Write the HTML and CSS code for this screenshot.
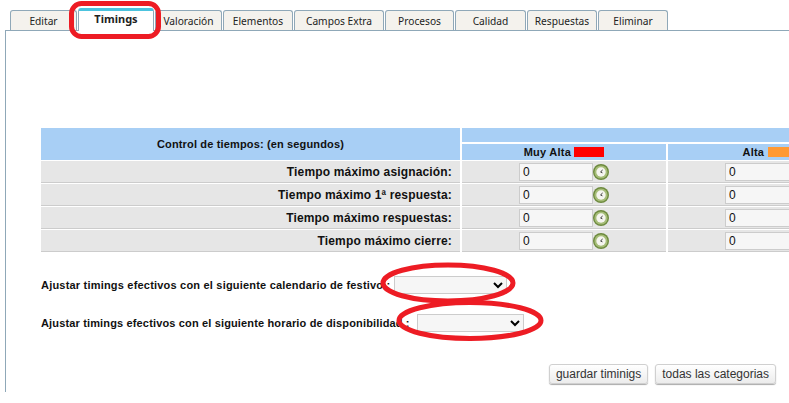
FILE: index.html
```html
<!DOCTYPE html>
<html lang="es">
<head>
<meta charset="utf-8">
<title>Timings</title>
<link rel="stylesheet" href="styles.css">
</head>
<body>
<nav class="tabs">
  <a class="tab tab-first">Editar</a>
  <a class="tab tab-active">Timings</a>
  <a class="tab tab-val">Valoración</a>
  <a class="tab tab-ele">Elementos</a>
  <a class="tab tab-cam">Campos Extra</a>
  <a class="tab tab-pro">Procesos</a>
  <a class="tab tab-cal">Calidad</a>
  <a class="tab tab-ele">Respuestas</a>
  <a class="tab tab-ele">Eliminar</a>
</nav>
<main class="panel">
  <table class="timings">
    <colgroup><col class="c1"><col class="c2"><col class="c3"></colgroup>
    <thead>
      <tr><th rowspan="2" class="head-main">Control de tiempos: (en segundos)</th><th colspan="2" class="head-top"></th></tr>
      <tr>
        <th class="head-sub">Muy Alta <span class="swatch swatch-red"></span></th>
        <th class="head-sub">Alta <span class="swatch swatch-orange"></span></th>
      </tr>
    </thead>
    <tbody>
      <tr><td class="label">Tiempo máximo asignación:</td>
        <td class="val"><div class="field"><input value="0"><svg class="clock" viewBox="0 0 16 16"><use href="#clock"/></svg></div></td>
        <td class="val"><div class="field"><input value="0"></div></td></tr>
      <tr><td class="label">Tiempo máximo 1ª respuesta:</td>
        <td class="val"><div class="field"><input value="0"><svg class="clock" viewBox="0 0 16 16"><use href="#clock"/></svg></div></td>
        <td class="val"><div class="field"><input value="0"></div></td></tr>
      <tr><td class="label">Tiempo máximo respuestas:</td>
        <td class="val"><div class="field"><input value="0"><svg class="clock" viewBox="0 0 16 16"><use href="#clock"/></svg></div></td>
        <td class="val"><div class="field"><input value="0"></div></td></tr>
      <tr><td class="label">Tiempo máximo cierre:</td>
        <td class="val"><div class="field"><input value="0"><svg class="clock" viewBox="0 0 16 16"><use href="#clock"/></svg></div></td>
        <td class="val"><div class="field"><input value="0"></div></td></tr>
    </tbody>
  </table>
  <div class="adjust adjust-1">
    <label>Ajustar timings efectivos con el siguiente calendario de festivo :</label>
    <select class="sel sel-1"><option></option></select>
  </div>
  <div class="adjust adjust-2">
    <label>Ajustar timings efectivos con el siguiente horario de disponibilidad :</label>
    <select class="sel sel-2"><option></option></select>
  </div>
  <div class="actions">
    <button>guardar timinigs</button>
    <button>todas las categorias</button>
  </div>
</main>
<svg class="marks" viewBox="0 0 789 403" aria-hidden="true">
  <rect x="71.5" y="3.5" width="87" height="33" rx="10" class="mark"/>
  <ellipse cx="448" cy="283" rx="65" ry="18" class="mark"/>
  <ellipse cx="470" cy="320.5" rx="71" ry="18" class="mark"/>
</svg>
<svg class="defs" width="0" height="0" aria-hidden="true">
  <defs>
    <g id="clock">
      <circle cx="8" cy="8" r="8" fill="#6d8a3e"/>
      <circle cx="8" cy="8" r="6.6" fill="#a6bd78"/>
      <circle cx="8" cy="8" r="4.7" fill="#f5f5ef"/>
      <path d="M9.6 6 L7.6 7.9 L9.4 8.8" fill="none" stroke="#333" stroke-width="1"/>
    </g>
  </defs>
</svg>
</body>
</html>
```
FILE: styles.css
```css
html, body { margin: 0; padding: 0; background: #fff; overflow: hidden; height: 403px; }
body { position: relative; font-family: "Liberation Sans", Arial, sans-serif; color: #111; }

.tabs { display: flex; align-items: flex-end; gap: 1px; height: 31px; padding-left: 10px; box-sizing: border-box; }
.tab {
  box-sizing: border-box; width: 70px; height: 20px; margin-bottom: 1px;
  display: flex; align-items: center; justify-content: center;
  background: #f4f2ed; border: 1px solid #8fa8b8; border-bottom: 0; border-radius: 3px 3px 0 0;
  font: 10.2px "Noto Sans", Tahoma, sans-serif; color: #222;
}
.tab-first { width: 67px; }
.tab-active {
  width: 76px; height: 23px; margin-bottom: 0; background: #fff; border-top: 3px solid #4cc3de;
  font-size: 11px; font-weight: bold; align-items: flex-start; position: relative; z-index: 1;
}
.tab-val { width: 67px; }
.tab-ele { width: 70px; }
.tab-cam { width: 90px; }
.tab-pro { width: 69px; }
.tab-cal { width: 71px; }

.panel {
  margin-left: 5px; height: 362px; box-sizing: border-box; border-left: 1px solid #8fa8b8; border-top: 1px solid #8fa8b8;
  margin-top: -1px; padding: 97px 13px 0 33px;
}
.timings { border-collapse: separate; border-spacing: 2px 0; table-layout: fixed; width: 835px; }
.c1 { width: 419px; } .c2 { width: 204px; } .c3 { width: 204px; }
.timings th { background: #a8cff5; font-size: 11px; padding: 0; color: #111; }
.head-main { letter-spacing: .15px; }
.head-top { height: 14px; border-bottom: 2px solid #fff; }
.head-sub { height: 16px; letter-spacing: .25px; }
.swatch { display: inline-block; width: 30px; height: 10px; vertical-align: -1px; }
.swatch-red { background: #f00; }
.swatch-orange { background: #f93; }
.timings td { background: #e6e6e6; height: 21px; padding: 0; border-bottom: 1px solid #ccc; border-top: 1px solid #fff; }
.label { text-align: right; font-size: 12px; font-weight: bold; padding-right: 8px !important; letter-spacing: .16px; }
.field { display: flex; align-items: center; padding-left: 57px; }
.field input {
  box-sizing: border-box; width: 74px; height: 18px; padding: 0 3px; margin: 0; background: #f6f6f6;
  border: 1px solid #ccc; font: 12px "Liberation Sans", Arial, sans-serif; color: #111; outline: 0;
}
.clock { width: 16px; height: 16px; display: block; }

.adjust { display: flex; align-items: center; font-size: 11px; font-weight: bold; letter-spacing: .2px; padding-left: 2px; }
.adjust-1 { margin-top: 24px; }
.adjust-2 { margin-top: 20px; letter-spacing: .15px; }
.sel {
  box-sizing: border-box; height: 18px; background: #f6f6f6; border: 1px solid #ccc; margin: 0; padding: 0;
  font: 12px "Liberation Sans", Arial, sans-serif;
}
.sel-1 { width: 113px; margin-left: 4px; }
.sel-2 { width: 107px; margin-left: 7px; }

.actions { display: flex; justify-content: flex-end; gap: 7px; margin-top: 32px; }
.actions button {
  box-sizing: border-box; height: 20px; padding: 0 6px; border: 1px solid #d0d0d0; border-radius: 3px;
  background: linear-gradient(#fff, #ececec); box-shadow: 0 1px 1px #aaa;
  font: 12px "Liberation Sans", Arial, sans-serif; color: #333;
}

.marks { position: absolute; left: 0; top: 0; width: 789px; height: 403px; pointer-events: none; z-index: 5; }
.mark { fill: none; stroke: #ed1c24; stroke-width: 5; }
.defs { position: absolute; }
```
